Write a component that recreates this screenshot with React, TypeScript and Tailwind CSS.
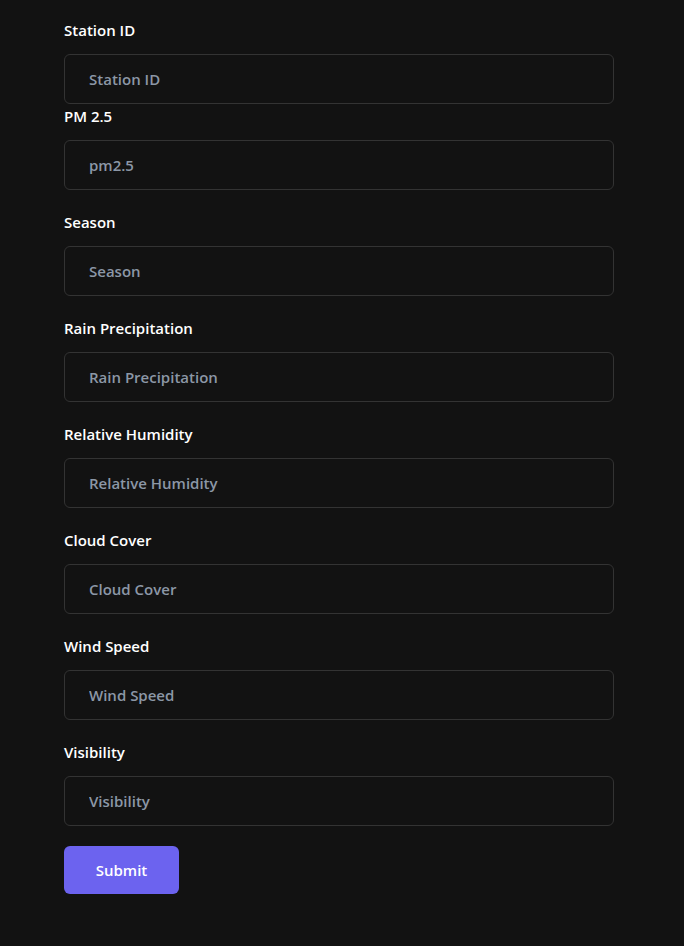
import React from "react";

const fields: [string, string][] = [
  ["Station ID", "Station ID"],
  ["PM 2.5", "pm2.5"],
  ["Season", "Season"],
  ["Rain Precipitation", "Rain Precipitation"],
  ["Relative Humidity", "Relative Humidity"],
  ["Cloud Cover", "Cloud Cover"],
  ["Wind Speed", "Wind Speed"],
  ["Visibility", "Visibility"],
];

export default function App() {
  return (
    <div
      className="min-h-[946px] w-full bg-[#121212] pt-[18px] pb-[52px]"
      style={{ fontFamily: '"Open Sans", "Noto Sans", sans-serif' }}
    >
      <form className="ml-[64px] w-[550px] flex flex-col" onSubmit={(e) => e.preventDefault()}>
        {fields.map(([label, ph], i) => (
          <div key={label} className={i <= 1 ? "" : "mt-5"}>
            <label className="block text-[15px] leading-6 font-semibold text-white">{label}</label>
            <input
              placeholder={ph}
              className="mt-3 block h-[50px] w-full rounded-md border border-[#333333] bg-[#121212] px-6 text-[15px] font-semibold text-white placeholder:text-[#8c97a6] outline-none"
            />
          </div>
        ))}
        <button
          type="submit"
          className="mt-5 h-[48px] w-[115px] rounded-md bg-[#6c63ef] text-[15px] font-semibold text-white"
        >
          Submit
        </button>
      </form>
    </div>
  );
}
